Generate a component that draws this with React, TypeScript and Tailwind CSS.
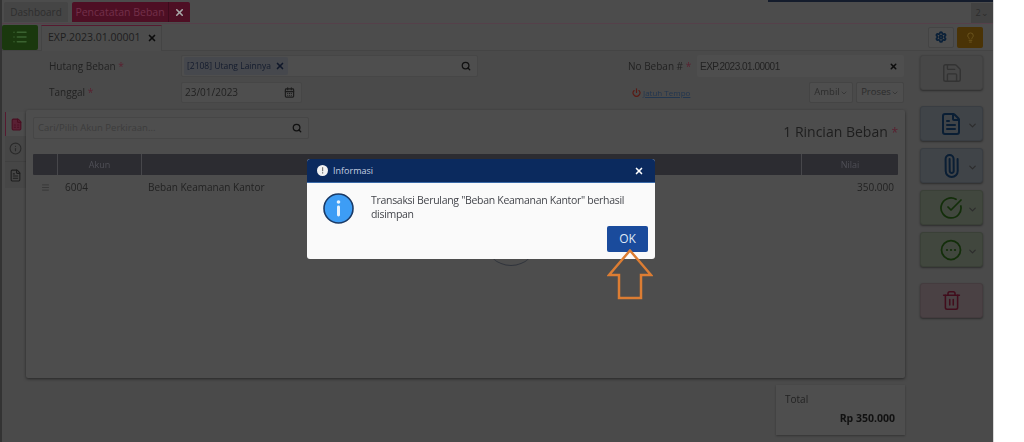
import React from "react";
import { X, Search, CalendarDays, FileText, Paperclip, CircleCheckBig, Trash2, Save, ChevronDown, List, Lightbulb, Settings, Info, Menu, FileSpreadsheet, Power } from "lucide-react";

const font = { fontFamily: '"Open Sans", "Noto Sans", sans-serif' };

function SideBtn({ bg, border, color, icon, chevron = true, className = "" }: { bg: string; border: string; color: string; icon: React.ReactNode; chevron?: boolean; className?: string }) {
  return (
    <div className={`w-[63px] h-[35px] rounded-[3px] border flex items-center justify-center gap-[4px] shadow-[0_1px_2px_rgba(0,0,0,0.4)] ${bg} ${border} ${color} ${className}`}>
      <span className={chevron ? "ml-[14px]" : ""}>{icon}</span>
      {chevron && <ChevronDown size={11} strokeWidth={2.5} className="text-[#2c2c2c] mt-[3px]" />}
    </div>
  );
}

export default function App() {
  return (
    <div className="w-[1024px] h-[442px] bg-white flex overflow-hidden" style={font}>
      <div className="relative w-[993px] h-[442px] bg-[#4a4a4a] border-l-2 border-[#333] overflow-hidden shrink-0">
        <div className="h-full flex flex-col blur-[0.4px]">
          <div className="absolute right-0 top-0 w-[225px] h-[2px] bg-[#141c2c] z-10" />
          {/* Top tabs */}
          <div className="h-[24px] shrink-0 border-b border-[#55404a] bg-[#4c4c4c] flex items-end pl-[2px] text-[10px]">
            <div className="h-[20px] w-[64px] mb-[1px] rounded-t-[2px] bg-[#454545] text-[#2e2e2e] flex items-center justify-center">Dashboard</div>
            <div className="h-[20px] ml-[4px] mb-[1px] rounded-t-[2px] bg-[#4e0f24] text-[#73304a] flex items-center text-[10.5px]">
              <span className="w-[97px] text-center border-r border-[#3c0b1c] leading-[20px]">Pencatatan Beban</span>
              <span className="w-[21px] flex justify-center text-[#a8a8a8]"><X size={11} strokeWidth={3.5} /></span>
            </div>
            <div className="ml-auto w-[22px] h-[20px] bg-[#424242] text-[#2c2c2c] text-[9px] flex items-center justify-center">2⌄</div>
          </div>
          {/* Second row */}
          <div className="h-[27px] shrink-0 bg-[#4c4c4c] border-b border-[#444] flex items-center">
            <div className="w-[36px] h-[25px] bg-[#1a380e] text-[#3a6230] rounded-[2px] flex items-center justify-center"><List size={16} strokeWidth={2.25} /></div>
            <div className="ml-[3px] w-[121px] h-[26px] mt-[1px] border-t border-[#561a30] bg-[#4c4c4c] border-x border-x-[#444] flex items-center pl-[6px] text-[10.5px] text-[#1e1e1e]">
              EXP.2023.01.00001
              <X size={10} strokeWidth={4} className="ml-[6px] text-[#0c0c0c]" />
            </div>
            <div className="ml-auto mr-[10px] flex gap-[3px]">
              <div className="w-[26px] h-[21px] bg-[#4e4e4e] border border-[#444] rounded-[2px] flex items-center justify-center text-[#0a2038]"><Settings size={12} strokeWidth={3.5} /></div>
              <div className="w-[26px] h-[21px] bg-[#4a3306] rounded-[2px] flex items-center justify-center text-[#6e5820]"><Lightbulb size={11} /></div>
            </div>
          </div>
          {/* Body */}
          <div className="flex-1 flex min-h-0">
            <div className="w-[903px] shrink-0 flex flex-col">
              {/* Form row 1 */}
              <div className="mt-[4px] h-[22px] flex items-center text-[10px] text-[#222]">
                <span className="ml-[47px] w-[132px]">Hutang Beban <span className="text-[#5a2030]">*</span></span>
                <div className="w-[297px] h-[22px] bg-[#4e4e4e] border border-[#464646] rounded-[2px] flex items-center pl-[2px] pr-[6px]">
                  <span className="h-[18px] px-[3px] bg-[#46484d] rounded-[2px] text-[8.5px] text-[#141c2e] flex items-center gap-[4px]">[2108] Utang Lainnya <X size={10} strokeWidth={4} className="text-[#10182a]" /></span>
                  <Search size={10} strokeWidth={3} className="ml-auto text-[#111]" />
                </div>
                <span className="ml-[150px] w-[69px] whitespace-nowrap">No Beban # <span className="text-[#5a2030]">*</span></span>
                <div className="w-[207px] h-[22px] bg-[#4e4e4e] rounded-[2px] flex items-center px-[3px] text-[10px] text-[#222] tracking-[-0.5px]" style={{ fontFamily: '"Liberation Sans", sans-serif' }}>
                  EXP.2023.01.00001
                  <X size={9} strokeWidth={4} className="ml-auto mr-[3px] text-[#0c0c0c]" />
                </div>
              </div>
              {/* Form row 2 */}
              <div className="mt-[5px] h-[21px] flex items-center text-[10px] text-[#222]">
                <span className="ml-[47px] w-[132px]">Tanggal <span className="text-[#5a2030]">*</span></span>
                <div className="w-[121px] h-[21px] bg-[#4e4e4e] border border-[#464646] rounded-[2px] flex items-center px-[3px]">
                  23/01/2023
                  <CalendarDays size={11} strokeWidth={2.5} className="ml-auto mr-[3px] text-[#1c1c1c]" />
                </div>
                <div className="ml-[330px] w-[177px] flex items-center gap-[2px] text-[8px] text-[#22364f]">
                  <Power size={9} strokeWidth={3} className="text-[#5a1a14]" />
                  <span className="underline">Jatuh Tempo</span>
                </div>
                <div className="w-[44px] h-[21px] bg-[#4e4e4e] border border-[#444] rounded-[2px] flex items-center justify-center text-[9.5px] text-[#2c2c2c]">Ambil<ChevronDown size={8} /></div>
                <div className="ml-[3px] w-[48px] h-[21px] bg-[#4e4e4e] border border-[#444] rounded-[2px] flex items-center justify-center text-[9.5px] text-[#2c2c2c]">Proses<ChevronDown size={8} /></div>
              </div>
              {/* Panel with side tabs */}
              <div className="mt-[7px] h-[268px] flex">
                <div className="ml-[3px] w-[21px] mt-[2px] flex flex-col">
                  <div className="h-[24px] bg-[#4c4c4c] border-l border-[#561a30] flex items-center justify-center text-[#4a0f22]"><FileSpreadsheet size={13} fill="#5a2034" /></div>
                  <div className="h-[26px] bg-[#464646] flex items-center justify-center text-[#2a2a2a] border-b border-[#404040]"><Info size={13} /></div>
                  <div className="h-[26px] bg-[#464646] flex items-center justify-center text-[#1e1e1e]"><FileText size={13} /></div>
                </div>
                <div className="w-[879px] bg-[#4d4d4d] rounded-[2px] shadow-[0_1px_3px_rgba(0,0,0,0.5)] px-[7px] flex flex-col">
                  <div className="mt-[7px] flex items-start justify-between">
                    <div className="w-[276px] h-[22px] bg-[#4e4e4e] border border-[#464646] rounded-[2px] flex items-center pl-[4px] pr-[6px] text-[9.5px] text-[#3c3c3c]">
                      Cari/Pilih Akun Perkiraan...
                      <Search size={10} strokeWidth={3} className="ml-auto text-[#111]" />
                    </div>
                    <div className="mt-[5px] text-[14px] leading-[20px] text-[#1e1e1e]">1 Rincian Beban <span className="text-[#5a2030] text-[12px]">*</span></div>
                  </div>
                  <div className="mt-[11px] h-[21px] bg-[#2c2c31] rounded-[1px] flex text-[9px] text-[#4f4f56] items-center">
                    <div className="w-[25px] h-full border-r border-[#47474b]" />
                    <div className="w-[84px] h-full border-r border-[#47474b] flex items-center justify-center">Akun</div>
                    <div className="w-[660px] h-full border-r border-[#47474b]" />
                    <div className="flex-1 text-center">Nilai</div>
                  </div>
                  <div className="h-[25px] flex items-center text-[10px] text-[#222]">
                    <div className="w-[25px] flex justify-center text-[#333]"><Menu size={9} /></div>
                    <div className="w-[84px] pl-[7px]">6004</div>
                    <div className="w-[660px] pl-[6px]">Beban Keamanan Kantor</div>
                    <div className="flex-1 text-right pr-[4px]">350.000</div>
                  </div>
                </div>
              </div>
              {/* Total */}
              <div className="mt-[7px] ml-[774px] w-[129px] h-[50px] bg-[#4e4e4e] shadow-[0_1px_2px_rgba(0,0,0,0.3)] px-[9px] pt-[7px] flex flex-col text-[10px] text-[#222]">
                <span>Total</span>
                <span className="mt-[4px] pr-[1px] text-right font-bold text-[10.5px] leading-[14px] text-[#111]">Rp 350.000</span>
              </div>
            </div>
            {/* Side buttons */}
            <div className="ml-[15px] pt-[4px] flex flex-col">
              <SideBtn bg="bg-[#474747]" border="border-[#424242]" color="text-[#333]" chevron={false} icon={<Save size={22} strokeWidth={1.5} />} />
              <SideBtn className="mt-[16px]" bg="bg-[#404448]" border="border-[#393d42]" color="text-[#0a1e34]" icon={<FileText size={24} strokeWidth={2} />} />
              <SideBtn className="mt-[7px]" bg="bg-[#404448]" border="border-[#393d42]" color="text-[#0a1e34]" icon={<Paperclip size={24} strokeWidth={2} className="-rotate-45" />} />
              <SideBtn className="mt-[7px]" bg="bg-[#41473e]" border="border-[#3a4037]" color="text-[#132e0a]" icon={<CircleCheckBig size={24} strokeWidth={1.75} />} />
              <SideBtn
                className="mt-[7px]"
                bg="bg-[#41473e]"
                border="border-[#3a4037]"
                color="text-[#132e0a]"
                icon={
                  <svg className="block" width="24" height="24" viewBox="0 0 24 24">
                    <circle cx="12" cy="12" r="9.5" fill="none" stroke="currentColor" strokeWidth="1.75" />
                    <circle cx="8" cy="12" r="1.1" fill="currentColor" />
                    <circle cx="12" cy="12" r="1.1" fill="currentColor" />
                    <circle cx="16" cy="12" r="1.1" fill="currentColor" />
                  </svg>
                }
              />
              <SideBtn className="mt-[16px]" bg="bg-[#4a4144]" border="border-[#443b3e]" color="text-[#410d1c]" chevron={false} icon={<Trash2 size={21} strokeWidth={1.75} />} />
            </div>
          </div>
          <div className="absolute left-[483px] top-[236px] w-[52px] h-[30px] rounded-b-full border-b border-[#30343c]" />
        </div>

        {/* Dialog */}
        <div className="absolute left-[305px] top-[159px] w-[348px] h-[100px] bg-[#fafafa] rounded-[3px] flex flex-col overflow-hidden">
          <div className="h-[24px] bg-[#0b2a5e] border-b border-[#3a6aa8] flex items-center pl-[10px] pr-[11px] text-[9px] text-[#c5d0e0]">
            <svg width="11" height="11" viewBox="0 0 11 11"><circle cx="5.5" cy="5.5" r="5.5" fill="#f2f2f2" /><rect x="5" y="2.2" width="1.2" height="4" fill="#777" /><rect x="5" y="7.2" width="1.2" height="1.3" fill="#777" /></svg>
            <span className="ml-[5px]">Informasi</span>
            <X size={10} strokeWidth={4} className="ml-auto text-white" />
          </div>
          <div className="flex-1 relative flex">
            <svg className="ml-[16px] mt-[10px] shrink-0" width="31" height="31" viewBox="0 0 31 31">
              <circle cx="15.5" cy="15.5" r="14.5" fill="#3d9df5" stroke="#1a3a66" strokeWidth="1.6" />
              <circle cx="15.5" cy="9" r="1.8" fill="#e8f3fd" />
              <rect x="14" y="12.5" width="3" height="11" rx="1.4" fill="#e8f3fd" />
            </svg>
            <div className="ml-[17px] mt-[10px] w-[270px] text-[10.5px] tracking-[-0.3px] leading-[14px] text-[#44464c]">Transaksi Berulang "Beban Keamanan Kantor" berhasil disimpan</div>
            <div className="absolute left-[300px] top-[43px] w-[41px] h-[26px] bg-[#1a4b9c] rounded-[2px] text-[#dfe8f5] text-[12px] font-medium flex items-center justify-center">OK</div>
          </div>
        </div>

        {/* Arrow */}
        <svg className="absolute left-[605px] top-[249px]" width="46" height="51" viewBox="0 0 46 51">
          <path d="M23 1.5 L44 26 H34 V49 H12 V26 H2 Z" fill="none" stroke="#dc7d33" strokeWidth="2.5" strokeLinejoin="miter" />
        </svg>
      </div>
      <div className="flex-1 border-l border-[#d8d8d8] bg-white" />
    </div>
  );
}
